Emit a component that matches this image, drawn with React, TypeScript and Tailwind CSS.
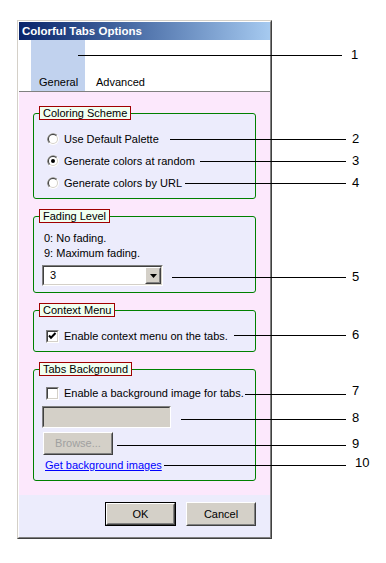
import type { ReactNode } from 'react';

const callouts: { n: string; x: number; y: number; end: number; nx: number }[] = [
  { n: '1', x: 78, y: 55, end: 342, nx: 351 },
  { n: '2', x: 170, y: 139, end: 346, nx: 352 },
  { n: '3', x: 200, y: 161, end: 346, nx: 352 },
  { n: '4', x: 185, y: 183, end: 346, nx: 352 },
  { n: '5', x: 172, y: 277, end: 346, nx: 352 },
  { n: '6', x: 234, y: 335, end: 346, nx: 352 },
  { n: '7', x: 245, y: 394, end: 346, nx: 352 },
  { n: '8', x: 181, y: 419, end: 346, nx: 352 },
  { n: '9', x: 117, y: 445, end: 346, nx: 352 },
  { n: '10', x: 164, y: 465, end: 346, nx: 355 },
];

const numberTops: Record<string, number> = { '7': 390, '8': 417, '9': 443, '10': 462 };

function Radio({ checked }: { checked?: boolean }) {
  return (
    <svg width="12" height="12" viewBox="0 0 12 12" className="shrink-0">
      <circle cx="6" cy="6" r="6" fill="#ffffff" />
      <path d="M1.76 10.24 A6 6 0 0 1 10.24 1.76 Z" fill="#808080" />
      <circle cx="6" cy="6" r="5" fill="#d4d0c8" />
      <path d="M2.46 9.54 A5 5 0 0 1 9.54 2.46 Z" fill="#404040" />
      <circle cx="6" cy="6" r="4" fill="#ffffff" />
      {checked && <circle cx="6" cy="6" r="2" fill="#000000" />}
    </svg>
  );
}

function Sunken({ className, inner, children }: { className: string; inner: string; children?: ReactNode }) {
  return (
    <div className={`border border-t-[#808080] border-l-[#808080] border-r-white border-b-white ${className}`}>
      <div className={`h-full w-full border border-t-[#404040] border-l-[#404040] border-r-[#d4d0c8] border-b-[#d4d0c8] ${inner}`}>
        {children}
      </div>
    </div>
  );
}

function Raised({ className, children }: { className: string; children?: ReactNode }) {
  return (
    <div className={`border border-t-white border-l-white border-r-[#404040] border-b-[#404040] ${className}`}>
      <div className="flex h-full w-full items-center justify-center border border-t-[#d4d0c8] border-l-[#d4d0c8] border-r-[#808080] border-b-[#808080] bg-[#d4d0c8]">
        {children}
      </div>
    </div>
  );
}

function Checkbox({ checked }: { checked?: boolean }) {
  return (
    <Sunken className="h-[13px] w-[13px] shrink-0" inner="bg-white">
      {checked && (
        <svg width="9" height="9" viewBox="0 0 9 9" className="block">
          <path d="M1 3.5 L3 5.7 L7.5 1" fill="none" stroke="#000" strokeWidth="2" />
        </svg>
      )}
    </Sunken>
  );
}

function Group({ title, className, children }: { title: string; className?: string; children: ReactNode }) {
  return (
    <div className={`rounded-[3px] border border-[#008000] bg-[#ececfc] ${className ?? ''}`}>
      <div className="-mt-[8px] ml-[5px] h-[14px] w-fit border border-[#a00000] bg-[#f0fff0] px-[3px] leading-[12px]">
        {title}
      </div>
      {children}
    </div>
  );
}

export default function App() {
  return (
    <div className="relative h-[563px] w-[386px] overflow-hidden bg-white pl-[17px] pt-[20px] font-['Liberation_Sans',Arial,sans-serif] text-[11px] text-black">
      <div className="h-[519px] w-[255px] border border-t-[#d4d0c8] border-l-[#d4d0c8] border-r-[#404040] border-b-[#404040]">
        <div className="flex h-full w-full flex-col border border-t-white border-l-white border-r-[#808080] border-b-[#808080]">
          <div className="h-[18px] bg-linear-to-r from-[#0a246a] to-[#a6caf0] pl-[3px] text-[11.5px] font-bold leading-[18px] text-white">
            Colorful Tabs Options
          </div>

          <div className="flex h-[52px] items-end border-b border-[#808080] bg-white">
            <div className="ml-[12px] flex h-full w-[54px] items-end bg-[#c1d2ee] pb-[2px] pl-[8px] leading-[13px]">General</div>
            <div className="pb-[2px] pl-[11px] leading-[13px]">Advanced</div>
          </div>

          <div className="h-[403px] bg-[#fce8fc] px-[14px] pt-[21px]">
            <Group title="Coloring Scheme" className="pb-[4px]">
              <div className="mt-[8px]">
                <div className="flex h-[22px] items-center gap-[5px] pl-[13px]">
                  <Radio />
                  <span>Use Default Palette</span>
                </div>
                <div className="flex h-[22px] items-center gap-[5px] pl-[13px]">
                  <Radio checked />
                  <span>Generate colors at random</span>
                </div>
                <div className="flex h-[22px] items-center gap-[5px] pl-[13px]">
                  <Radio />
                  <span>Generate colors by URL</span>
                </div>
              </div>
            </Group>

            <Group title="Fading Level" className="mt-[17px] pb-[6px]">
              <div className="mt-[8px] pl-[10px] leading-[15px]">
                <div>0: No fading.</div>
                <div>9: Maximum fading.</div>
              </div>
              <Sunken className="ml-[8px] mt-[4px] h-[21px] w-[121px]" inner="flex items-center bg-white">
                <span className="flex-1 pl-[6px]">3</span>
                <Raised className="h-full w-[16px]">
                  <svg width="7" height="4" viewBox="0 0 7 4">
                    <path d="M0 0 H7 L3.5 4 Z" fill="#000" />
                  </svg>
                </Raised>
              </Sunken>
            </Group>

            <Group title="Context Menu" className="mt-[17px] pb-[4px]">
              <div className="mt-[8px] flex h-[22px] items-center gap-[5px] pl-[12px]">
                <Checkbox checked />
                <span>Enable context menu on the tabs.</span>
              </div>
            </Group>

            <Group title="Tabs Background" className="mt-[17px] pb-[8px]">
              <div className="mt-[6px] flex h-[22px] items-center gap-[5px] pl-[12px]">
                <Checkbox />
                <span>Enable a background image for tabs.</span>
              </div>
              <Sunken className="ml-[8px] mt-[2px] h-[22px] w-[129px]" inner="bg-[#d4d0c8]" />
              <Raised className="ml-[9px] mt-[4px] h-[23px] w-[70px]">
                <span className="text-[#a0a0a0]">Browse...</span>
              </Raised>
              <div className="ml-[11px] mt-[4px] leading-[13px]">
                <span className="text-[#0000ff] underline">Get background images</span>
              </div>
            </Group>
          </div>

          <div className="flex flex-1 justify-end gap-[10px] bg-[#ececfc] pr-[14px] pt-[7px]">
            <div className="h-[24px] w-[71px] border border-black">
              <Raised className="h-full w-full">OK</Raised>
            </div>
            <Raised className="h-[24px] w-[70px]">Cancel</Raised>
          </div>
        </div>
      </div>

      <div className="pointer-events-none absolute inset-0">
        {callouts.map((c) => (
          <div key={c.n}>
            <div
              className="absolute h-px bg-black"
              style={{ left: c.x, top: c.y, width: c.end - c.x }}
            />
            <div
              className="absolute text-[13px] leading-[15px]"
              style={{ left: c.nx, top: (numberTops[c.n] ?? c.y - 1) - 7 }}
            >
              {c.n}
            </div>
          </div>
        ))}
      </div>
    </div>
  );
}
